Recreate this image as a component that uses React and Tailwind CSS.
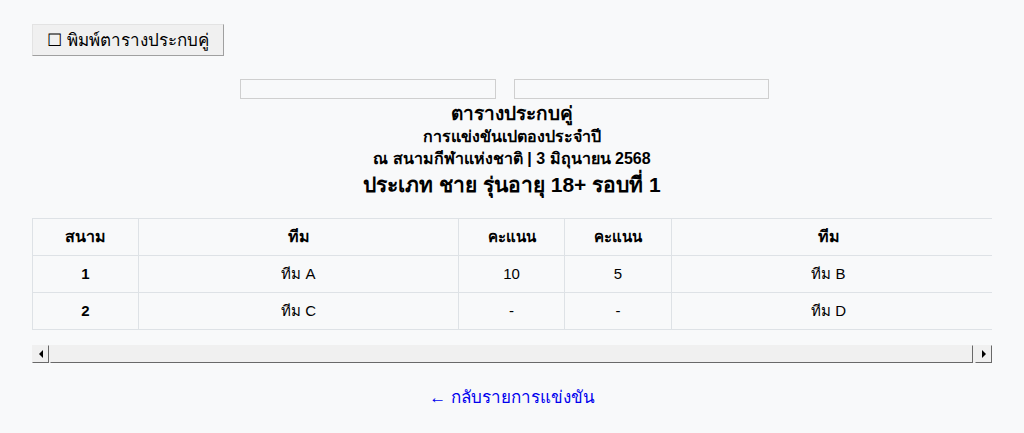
import React from "react";

const rows = [
  { court: "1", teamA: "ทีม A", scoreA: "10", scoreB: "5", teamB: "ทีม B" },
  { court: "2", teamA: "ทีม C", scoreA: "-", scoreB: "-", teamB: "ทีม D" }
];

const cell = "border border-[#dee2e6] h-[37px] px-2 text-center";
const lastCell = "border border-[#dee2e6] h-[37px] pl-2 pr-[44px] text-center";

const App = () => {
  return (
    <div className="min-h-[433px] bg-[#f8f9fa] px-8 pt-6 text-black [font-family:'Liberation_Sans',Arial,sans-serif]">
      <button className="h-8 w-[192px] border border-t-[#e3e3e3] border-l-[#e3e3e3] border-r-[#a0a0a0] border-b-[#a0a0a0] bg-[#f0f0f0] text-[17px] leading-none">
        ☐ พิมพ์ตารางประกบคู่
      </button>

      <div className="mt-[23px] flex justify-center gap-[18px] pr-[15px]">
        <div className="h-5 w-[256px] border border-[#cfcfcf] bg-[#f8f9fa]" />
        <div className="h-5 w-[255px] border border-[#cfcfcf] bg-[#f8f9fa]" />
      </div>

      <div className="mt-[3px] text-center font-bold">
        <div className="text-[19px] leading-[24px]">ตารางประกบคู่</div>
        <div className="text-[16px] leading-[22px]">การแข่งขันเปตองประจำปี</div>
        <div className="text-[16px] leading-[22px]">ณ สนามกีฬาแห่งชาติ | 3 มิถุนายน 2568</div>
        <div className="text-[21px] leading-[30px]">ประเภท ชาย รุ่นอายุ 18+ รอบที่ 1</div>
      </div>

      <div className="mt-[18px] w-[960px] overflow-hidden">
        <table className="w-[990px] border-collapse text-[15px]">
          <colgroup>
            <col className="w-[106px]" />
            <col className="w-[320px]" />
            <col className="w-[106px]" />
            <col className="w-[107px]" />
            <col />
          </colgroup>
          <thead>
            <tr className="font-bold">
              <th className={`${cell} text-[16px]`}>สนาม</th>
              <th className={`${cell} text-[16px]`}>ทีม</th>
              <th className={cell}>คะแนน</th>
              <th className={cell}>คะแนน</th>
              <th className={`${lastCell} text-[16px]`}>ทีม</th>
            </tr>
          </thead>
          <tbody>
            {rows.map((r) => (
              <tr key={r.court}>
                <td className={`${cell} font-bold`}>{r.court}</td>
                <td className={cell}>{r.teamA}</td>
                <td className={cell}>{r.scoreA}</td>
                <td className={cell}>{r.scoreB}</td>
                <td className={lastCell}>{r.teamB}</td>
              </tr>
            ))}
          </tbody>
        </table>
      </div>

      {/* fake classic scrollbar */}
      <div className="mt-[15px] flex h-[18px] w-[960px] bg-[#f0f0f0]">
        <div className="flex w-[17px] items-center justify-center border border-t-[#f0f0f0] border-l-[#f0f0f0] border-r-[#696969] border-b-[#696969] bg-[#f0f0f0]">
          <div className="h-0 w-0 border-y-[4px] border-r-[4px] border-y-transparent border-r-black" />
        </div>
        <div className="ml-[1px] flex-1 border border-t-[#f0f0f0] border-l-[#f0f0f0] border-r-[#696969] border-b-[#696969] bg-[#f0f0f0]" />
        <div className="ml-[2px] flex w-[17px] items-center justify-center border border-t-[#f0f0f0] border-l-[#f0f0f0] border-r-[#696969] border-b-[#696969] bg-[#f0f0f0]">
          <div className="h-0 w-0 border-y-[4px] border-l-[4px] border-y-transparent border-l-black" />
        </div>
      </div>

      <div className="mt-[22px] text-center">
        <a href="#" className="text-[17px] text-[#0000ee]">
          ← กลับรายการแข่งขัน
        </a>
      </div>
    </div>
  );
};

export default App;
